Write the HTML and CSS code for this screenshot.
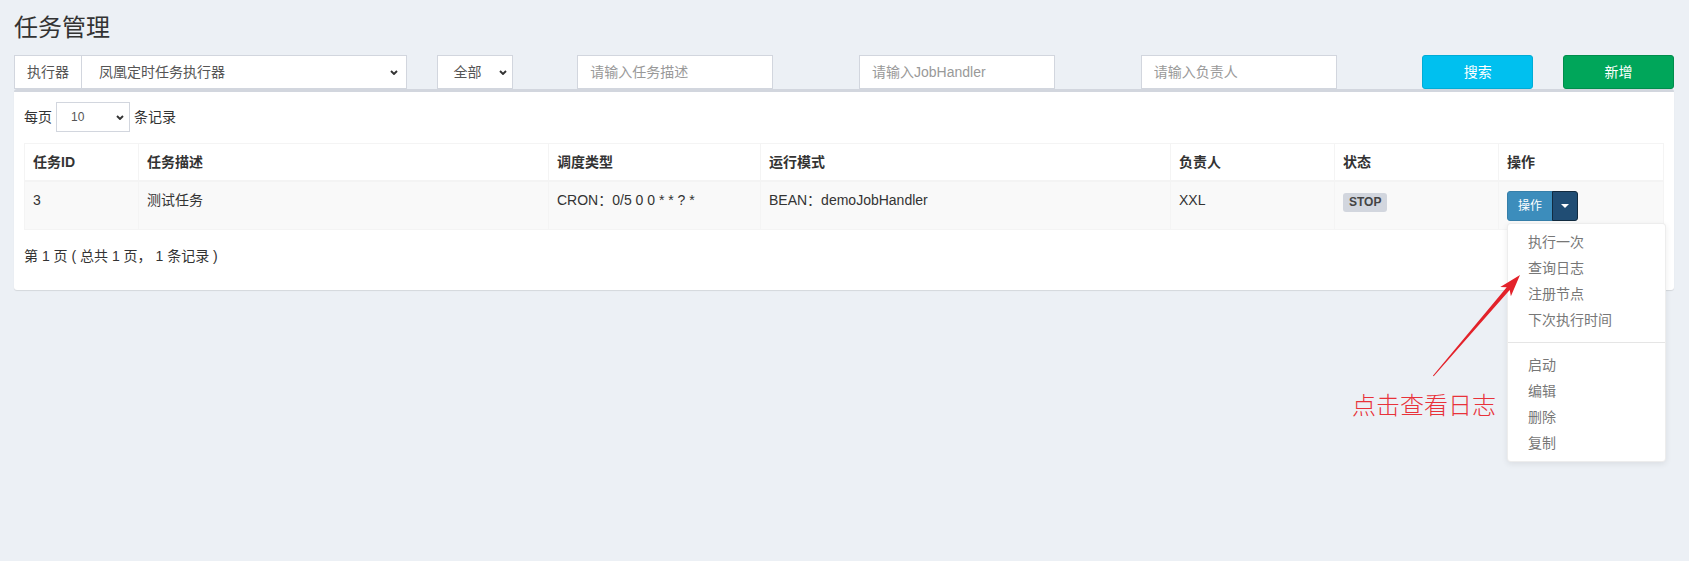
FILE: index.html
```html
<!DOCTYPE html>
<html lang="zh-CN">
<head>
<meta charset="utf-8">
<title>任务管理</title>
<link rel="stylesheet" href="styles.css">
</head>
<body>
<div class="page">
  <h1 class="page-title">任务管理</h1>
  <div class="filter-row">
    <div class="col col-3">
      <div class="input-group">
        <span class="addon">执行器</span>
        <div class="fake-select grow"><span>凤凰定时任务执行器</span><svg class="chev" width="8" height="5" viewBox="0 0 8 5"><path d="M1 1 L4 4 L7 1"/></svg></div>
      </div>
    </div>
    <div class="col col-1">
      <div class="fake-select status"><span>全部</span><svg class="chev" width="8" height="5" viewBox="0 0 8 5"><path d="M1 1 L4 4 L7 1"/></svg></div>
    </div>
    <div class="col col-2"><input class="text-input" type="text" placeholder="请输入任务描述"></div>
    <div class="col col-2"><input class="text-input" type="text" placeholder="请输入JobHandler"></div>
    <div class="col col-2"><input class="text-input" type="text" placeholder="请输入负责人"></div>
    <div class="col col-1"><button class="btn btn-info" type="button">搜索</button></div>
    <div class="col col-1"><button class="btn btn-success" type="button">新增</button></div>
  </div>

  <div class="box">
    <div class="box-body">
      <div class="length">
        <span>每页</span>
        <div class="fake-select sm"><span>10</span><svg class="chev" width="8" height="5" viewBox="0 0 8 5"><path d="M1 1 L4 4 L7 1"/></svg></div>
        <span>条记录</span>
      </div>
      <table class="grid">
        <colgroup>
          <col class="w-id"><col class="w-desc"><col class="w-type"><col class="w-mode"><col class="w-owner"><col class="w-status"><col>
        </colgroup>
        <thead>
          <tr><th>任务ID</th><th>任务描述</th><th>调度类型</th><th>运行模式</th><th>负责人</th><th>状态</th><th>操作</th></tr>
        </thead>
        <tbody>
          <tr>
            <td>3</td>
            <td>测试任务</td>
            <td>CRON：0/5 0 0 * * ? *</td>
            <td>BEAN：demoJobHandler</td>
            <td>XXL</td>
            <td><span class="label">STOP</span></td>
            <td>
              <div class="btn-group">
                <button class="btn-op" type="button">操作</button>
                <button class="btn-caret" type="button"><span class="caret"></span></button>
                <ul class="dropdown-menu">
                  <li>执行一次</li>
                  <li>查询日志</li>
                  <li>注册节点</li>
                  <li>下次执行时间</li>
                  <li class="divider"></li>
                  <li>启动</li>
                  <li>编辑</li>
                  <li>删除</li>
                  <li>复制</li>
                </ul>
              </div>
            </td>
          </tr>
        </tbody>
      </table>
      <div class="info">第 1 页 ( 总共 1 页， 1 条记录 )</div>
    </div>
  </div>
</div>

<svg class="arrow" width="1689" height="561" viewBox="0 0 1689 561">
  <polygon points="1432.9,375.7 1506.7,287.3 1500.3,287.1 1520,275 1510.9,296.3 1509.7,289.9 1433.7,376.3"/>
</svg>
<div class="note">点击查看日志</div>
</body>
</html>
```
FILE: styles.css
```css
* { box-sizing: border-box; }
html, body { margin: 0; padding: 0; }
body {
  width: 1689px;
  height: 561px;
  overflow: hidden;
  position: relative;
  background: #ecf0f5;
  font-family: "Liberation Sans", "Noto Sans CJK SC", sans-serif;
  font-size: 14px;
  line-height: 20px;
  color: #333;
}
.page { padding: 13px 15px 0 14px; }
.page-title {
  margin: 0 0 12px;
  font-size: 24px;
  line-height: 30px;
  font-weight: normal;
  color: #333;
}
.filter-row { display: flex; margin: 0 -15px; }
.col { padding: 0 15px; }
.col-3 { flex: 0 0 25%; }
.col-2 { flex: 0 0 16.66667%; }
.col-1 { flex: 0 0 8.33333%; }

.input-group { display: flex; height: 34px; }
.addon {
  border: 1px solid #d2d6de;
  background: #fff;
  color: #555;
  padding: 0 12px;
  line-height: 32px;
}
.fake-select {
  display: flex;
  align-items: center;
  justify-content: space-between;
  height: 34px;
  border: 1px solid #d2d6de;
  background: #fff;
  color: #555;
}
.fake-select.grow { flex: 1; border-left: 0; padding: 0 8px 0 17px; }
.fake-select.status { width: 76px; padding: 0 5px 0 16px; }
.fake-select.sm { width: 74px; height: 30px; padding: 0 5px 0 14px; font-size: 12px; color: #555; }
.chev { display: block; }
.chev path { fill: none; stroke: #333; stroke-width: 1.9; }

.text-input {
  display: block;
  width: 196px;
  height: 34px;
  border: 1px solid #d2d6de;
  border-radius: 0;
  padding: 6px 12px;
  font: inherit;
  font-size: 14px;
  color: #555;
  background: #fff;
  outline: none;
}
.text-input::placeholder { color: #999; }

.btn {
  display: block;
  width: 100%;
  height: 34px;
  border: 1px solid transparent;
  border-radius: 3px;
  color: #fff;
  font: inherit;
  font-size: 14px;
  cursor: pointer;
}
.btn-info { background: #00c0ef; border-color: #00acd6; }
.btn-success { background: #00a65a; border-color: #008d4c; }

.box {
  background: #fff;
  border-top: 3px solid #d2d6de;
  border-radius: 3px;
  box-shadow: 0 1px 1px rgba(0, 0, 0, 0.1);
}
.box-body { padding: 10px; }
.length { display: flex; align-items: center; gap: 4px; height: 30px; }

.grid {
  width: 100%;
  margin-top: 11px;
  border-collapse: collapse;
  table-layout: fixed;
  border: 1px solid #f4f4f4;
}
.w-id { width: 114px; }
.w-desc { width: 410px; }
.w-type { width: 212px; }
.w-mode { width: 410px; }
.w-owner { width: 164px; }
.w-status { width: 164px; }
.grid th, .grid td {
  padding: 8px;
  border: 1px solid #f4f4f4;
  text-align: left;
  vertical-align: top;
  line-height: 20px;
}
.grid thead th { border-bottom-width: 2px; font-weight: bold; color: #333; }
.grid tbody tr { background: #f9f9f9; }

.label {
  display: inline-block;
  vertical-align: top;
  margin-top: 3px;
  background: #d2d6de;
  color: #444;
  font-size: 12px;
  font-weight: bold;
  line-height: 12px;
  padding: 3px 6px 4px;
  border-radius: 3px;
}

.btn-group { position: relative; display: inline-flex; vertical-align: top; margin-top: 1px; }
.btn-op {
  background: #3c8dbc;
  border: 1px solid #367fa9;
  color: #fff;
  font: inherit;
  font-size: 12px;
  line-height: 18px;
  padding: 5px 10px;
  border-radius: 3px 0 0 3px;
}
.btn-caret {
  display: flex;
  align-items: center;
  margin-left: -1px;
  background: #204d74;
  border: 1px solid #122b40;
  padding: 0 8px;
  border-radius: 0 3px 3px 0;
}
.caret {
  display: block;
  width: 0;
  height: 0;
  border-top: 4px solid #fff;
  border-left: 4px solid transparent;
  border-right: 4px solid transparent;
}
.dropdown-menu {
  position: absolute;
  top: 100%;
  left: 0;
  z-index: 10;
  margin: 2px 0 0;
  min-width: 159px;
  padding: 5px 0;
  list-style: none;
  background: #fff;
  border: 1px solid rgba(0, 0, 0, 0.07);
  border-radius: 4px;
  box-shadow: 0 2px 6px rgba(0, 0, 0, 0.08);
}
.dropdown-menu li {
  padding: 3px 20px;
  line-height: 20px;
  color: #777;
  white-space: nowrap;
}
.dropdown-menu li.divider {
  height: 1px;
  padding: 0;
  margin: 9px 0;
  background: #e5e5e5;
}

.info { margin: 16px 0 14px; }

.arrow { position: absolute; left: 0; top: 0; pointer-events: none; z-index: 20; }
.arrow polygon { fill: #e3222a; }
.note {
  position: absolute;
  left: 1352px;
  top: 392px;
  font-family: "Noto Sans CJK SC", sans-serif;
  font-weight: 300;
  font-size: 24px;
  line-height: 24px;
  color: #e8323a;
  z-index: 20;
}
```
